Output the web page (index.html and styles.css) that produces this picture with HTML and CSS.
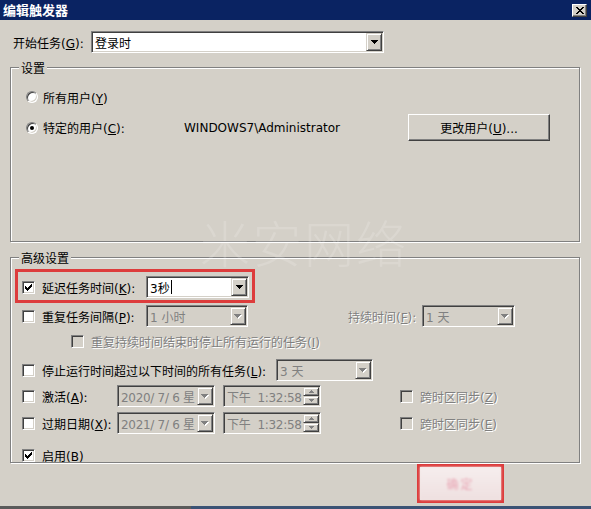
FILE: index.html
```html
<!DOCTYPE html>
<html lang="zh-CN">
<head>
<meta charset="utf-8">
<title>编辑触发器</title>
<link rel="stylesheet" href="styles.css">
</head>
<body>
<div class="window">
  <div class="titlebar">
    <span class="title">编辑触发器</span>
    <span class="close"><svg width="8" height="7" viewBox="0 0 8 7"><path d="M0 0h2v1h1v1h2V1h1V0h2v1H7v1H6v1H5v1h1v1h1v1h1v1H6V6H5V5H3v1H2v1H0V6h1V5h1V4h1V3H2V2H1V1H0z" fill="#000"/></svg></span>
  </div>

  <div class="start-row">
    <label class="start-label">开始任务(<u>G</u>):</label>
    <div class="field combo-start">
      <span class="field-text">登录时</span>
      <span class="dd"><svg class="arr" width="7" height="4" viewBox="0 0 7 4"><path d="M0 0h7v1H0zM1 1h5v1H1zM2 2h3v1H2zM3 3h1v1H3z"/></svg></span>
    </div>
  </div>

  <fieldset class="group group-settings">
    <legend>设置</legend>
    <div class="radio-row radio-row-1">
      <span class="radio"></span><span>所有用户(<u>Y</u>)</span>
    </div>
    <div class="radio-row radio-row-2">
      <span class="radio checked"></span><span class="radio-label">特定的用户(<u>C</u>):</span>
      <span class="user">WINDOWS7\Administrator</span>
      <button class="btn change-user">更改用户(<u>U</u>)...</button>
    </div>
  </fieldset>

  <fieldset class="group group-advanced">
    <legend>高级设置</legend>

    <div class="row row-delay">
      <span class="check checked"><svg width="7" height="7" viewBox="0 0 7 7"><path d="M6 0h1v3H6v1H5v1H4v1H3v1H2V6H1V5H0V2h1v1h1v1h1V3h1V2h1V1h1z"/></svg></span>
      <span class="lbl lbl-k">延迟任务时间(<u>K</u>):</span>
      <div class="field w-delay">
        <span class="field-text">3秒<i class="caret"></i></span>
        <span class="dd"><svg class="arr" width="7" height="4" viewBox="0 0 7 4"><path d="M0 0h7v1H0zM1 1h5v1H1zM2 2h3v1H2zM3 3h1v1H3z"/></svg></span>
      </div>
    </div>

    <div class="row row-repeat">
      <span class="check"></span>
      <span class="lbl lbl-k">重复任务间隔(<u>P</u>):</span>
      <div class="field disabled w-repeat">
        <span class="field-text">1 小时</span>
        <span class="dd"><svg class="arr" width="8" height="5" viewBox="0 0 8 5"><path fill="#fff" d="M1 1h7v1H1zM2 2h5v1H2zM3 3h3v1H3zM4 4h1v1H4z"/><path fill="#808080" d="M0 0h7v1H0zM1 1h5v1H1zM2 2h3v1H2zM3 3h1v1H3z"/></svg></span>
      </div>
      <span class="lbl dim lbl-dur">持续时间(<u>F</u>):</span>
      <div class="field disabled w-dur">
        <span class="field-text">1 天</span>
        <span class="dd"><svg class="arr" width="8" height="5" viewBox="0 0 8 5"><path fill="#fff" d="M1 1h7v1H1zM2 2h5v1H2zM3 3h3v1H3zM4 4h1v1H4z"/><path fill="#808080" d="M0 0h7v1H0zM1 1h5v1H1zM2 2h3v1H2zM3 3h1v1H3z"/></svg></span>
      </div>
    </div>

    <div class="row row-sub">
      <span class="check off"></span>
      <span class="lbl dim">重复持续时间结束时停止所有运行的任务(<u>I</u>)</span>
    </div>

    <div class="row row-stop">
      <span class="check"></span>
      <span class="lbl lbl-stop">停止运行时间超过以下时间的所有任务(<u>L</u>):</span>
      <div class="field disabled w-stop">
        <span class="field-text">3 天</span>
        <span class="dd"><svg class="arr" width="8" height="5" viewBox="0 0 8 5"><path fill="#fff" d="M1 1h7v1H1zM2 2h5v1H2zM3 3h3v1H3zM4 4h1v1H4z"/><path fill="#808080" d="M0 0h7v1H0zM1 1h5v1H1zM2 2h3v1H2zM3 3h1v1H3z"/></svg></span>
      </div>
    </div>

    <div class="row row-date row-act">
      <span class="check"></span>
      <span class="lbl lbl-date">激活(<u>A</u>):</span>
      <div class="field disabled w-date">
        <span class="field-text dt">2020/ 7/ 6 星</span>
        <span class="dd"><svg class="arr" width="8" height="5" viewBox="0 0 8 5"><path fill="#fff" d="M1 1h7v1H1zM2 2h5v1H2zM3 3h3v1H3zM4 4h1v1H4z"/><path fill="#808080" d="M0 0h7v1H0zM1 1h5v1H1zM2 2h3v1H2zM3 3h1v1H3z"/></svg></span>
      </div>
      <div class="field disabled w-time">
        <span class="field-text dt">下午&nbsp;&nbsp;1:32:58</span>
        <span class="spin">
          <span class="spin-btn"><svg width="5" height="3" viewBox="0 0 5 3"><path fill="#808080" d="M2 0h1v1h1v1h1v1H0V2h1V1h1z"/></svg></span>
          <span class="spin-btn"><svg width="5" height="3" viewBox="0 0 5 3"><path fill="#808080" d="M0 0h5v1H4v1H3v1H2V2H1V1H0z"/></svg></span>
        </span>
      </div>
      <span class="check off tz-check"></span>
      <span class="lbl dim">跨时区同步(<u>Z</u>)</span>
    </div>

    <div class="row row-date row-exp">
      <span class="check"></span>
      <span class="lbl lbl-date">过期日期(<u>X</u>):</span>
      <div class="field disabled w-date">
        <span class="field-text dt">2021/ 7/ 6 星</span>
        <span class="dd"><svg class="arr" width="8" height="5" viewBox="0 0 8 5"><path fill="#fff" d="M1 1h7v1H1zM2 2h5v1H2zM3 3h3v1H3zM4 4h1v1H4z"/><path fill="#808080" d="M0 0h7v1H0zM1 1h5v1H1zM2 2h3v1H2zM3 3h1v1H3z"/></svg></span>
      </div>
      <div class="field disabled w-time">
        <span class="field-text dt">下午&nbsp;&nbsp;1:32:58</span>
        <span class="spin">
          <span class="spin-btn"><svg width="5" height="3" viewBox="0 0 5 3"><path fill="#808080" d="M2 0h1v1h1v1h1v1H0V2h1V1h1z"/></svg></span>
          <span class="spin-btn"><svg width="5" height="3" viewBox="0 0 5 3"><path fill="#808080" d="M0 0h5v1H4v1H3v1H2V2H1V1H0z"/></svg></span>
        </span>
      </div>
      <span class="check off tz-check"></span>
      <span class="lbl dim">跨时区同步(<u>E</u>)</span>
    </div>

    <div class="row row-enable">
      <span class="check checked"><svg width="7" height="7" viewBox="0 0 7 7"><path d="M6 0h1v3H6v1H5v1H4v1H3v1H2V6H1V5H0V2h1v1h1v1h1V3h1V2h1V1h1z"/></svg></span>
      <span class="lbl">启用(B)</span>
    </div>
  </fieldset>

  <div class="footer">
    <div class="ok-mark"><button class="ok-btn">确定</button></div>
  </div>
  <div class="taskbar"></div>

  <div class="watermark">米安网络</div>
</div>
</body>
</html>
```

FILE: styles.css
```css
html, body {
  margin: 0;
  padding: 0;
}
body {
  width: 591px;
  height: 509px;
  overflow: hidden;
  background: #d4d0c8;
  font-family: "DejaVu Sans", "Noto Sans CJK SC", sans-serif;
  font-size: 12px;
  color: #000;
}
.window {
  position: relative;
  width: 591px;
  height: 509px;
  display: flex;
  flex-direction: column;
}
u { text-decoration: underline; text-underline-offset: 1px; }

.titlebar {
  height: 20px;
  flex: none;
  background: #0a2362;
  display: flex;
  align-items: center;
  justify-content: space-between;
  padding: 0 4px 0 3px;
}
.title {
  color: #fff;
  font-family: "Noto Sans CJK SC", sans-serif;
  font-weight: bold;
  font-size: 13px;
  line-height: 20px;
}
.close {
  width: 15px;
  height: 13px;
  box-sizing: border-box;
  background: #d4d0c8;
  border: 1px solid;
  border-color: #fff #404040 #404040 #fff;
  box-shadow: inset -1px -1px 0 #808080;
  display: flex;
  align-items: center;
  justify-content: center;
  margin-top: 1px;
}

.start-row {
  margin-top: 10px;
  height: 24px;
  display: flex;
  align-items: center;
  padding-left: 13px;
}
.start-label { width: 78px; }
.combo-start { width: 293px; height: 24px; }

/* sunken field */
.field {
  display: flex;
  box-sizing: border-box;
  background: #fff;
  border: 1px solid;
  border-color: #808080 #fff #fff #808080;
  box-shadow: inset 1px 1px 0 #404040, inset -1px -1px 0 #d4d0c8;
  padding: 1px;
  height: 22px;
  flex: none;
}
.field.disabled { background: #d4d0c8; color: #808080; }
.field-text {
  flex: 1;
  display: flex;
  align-items: center;
  padding-left: 2px;
  white-space: pre;
  overflow: hidden;
}
.field-text.dt { letter-spacing: -0.3px; }
.caret {
  display: inline-block;
  width: 1px;
  height: 14px;
  background: #000;
  margin-left: 1px;
}
.dd {
  width: 16px;
  flex: none;
  box-sizing: border-box;
  background: #d4d0c8;
  border: 1px solid;
  border-color: #d4d0c8 #404040 #404040 #d4d0c8;
  box-shadow: inset 1px 1px 0 #fff, inset -1px -1px 0 #808080;
  display: flex;
  align-items: center;
  justify-content: center;
}
.arr { display: block; }
.spin {
  width: 16px;
  flex: none;
  display: flex;
  flex-direction: column;
}
.spin-btn {
  flex: 1;
  box-sizing: border-box;
  background: #d4d0c8;
  border: 1px solid;
  border-color: #d4d0c8 #404040 #404040 #d4d0c8;
  box-shadow: inset 1px 1px 0 #fff, inset -1px -1px 0 #808080;
  display: flex;
  align-items: center;
  justify-content: center;
}

/* group boxes */
.group {
  margin: 0 11px 0 10px;
  padding: 0;
  border: 1px solid #808080;
  box-shadow: 1px 1px 0 #fff, inset 1px 1px 0 #fff;
  box-sizing: border-box;
  min-width: 0;
}
.group legend {
  margin-left: 8px;
  padding: 0 2px;
  line-height: 15px;
  font-family: "Noto Sans CJK SC", sans-serif;
  background: #d4d0c8;
}
.group-settings { margin-top: 6px; height: 182px; }
.group-advanced { margin-top: 8px; height: 213px; }

.radio-row {
  display: flex;
  align-items: center;
  padding-left: 15px;
}
.radio-row-1 { margin-top: 14px; height: 16px; }
.radio-row-2 { margin-top: 9px; height: 27px; }
.radio {
  width: 12px;
  height: 12px;
  box-sizing: border-box;
  border-radius: 50%;
  background: #fff;
  border: 1px solid;
  border-color: #808080 #fff #fff #808080;
  box-shadow: inset 1px 1px 0 #404040, inset -1px -1px 0 #d4d0c8;
  margin-right: 5px;
  position: relative;
  flex: none;
}
.radio.checked::after {
  content: "";
  position: absolute;
  left: 3px;
  top: 3px;
  width: 4px;
  height: 4px;
  border-radius: 50%;
  background: #000;
}
.radio-label { width: 141px; }
.user { width: 224px; }

.btn {
  font: inherit;
  color: #000;
  background: #d4d0c8;
  border: 1px solid;
  border-color: #fff #404040 #404040 #fff;
  box-shadow: inset -1px -1px 0 #808080;
  padding: 0;
  box-sizing: border-box;
}
.change-user { width: 142px; height: 27px; }

/* rows in advanced */
.row {
  display: flex;
  align-items: center;
  padding-left: 11px;
}
.check {
  width: 13px;
  height: 13px;
  box-sizing: border-box;
  background: #fff;
  border: 1px solid;
  border-color: #808080 #fff #fff #808080;
  box-shadow: inset 1px 1px 0 #404040, inset -1px -1px 0 #d4d0c8;
  display: flex;
  align-items: center;
  justify-content: center;
  flex: none;
  margin-right: 7px;
}
.check.off { background: #d4d0c8; }
.lbl { white-space: nowrap; }
.dim { color: #808080; text-shadow: 1px 1px 0 #fff; }

.row-delay {
  margin: 4px 0 0 4px;
  width: 240px;
  height: 34px;
  box-sizing: border-box;
  border: 3px solid #dd3c3c;
  padding: 2px 0 0 4px;
}
.lbl-k { width: 104px; }
.w-delay { width: 103px; }

.row-repeat { margin-top: 2px; height: 22px; }
.w-repeat { width: 102px; }
.lbl-dur { margin-left: 100px; width: 74px; }
.w-dur { width: 93px; }

.row-sub { margin-top: 6px; height: 16px; padding-left: 60px; }

.row-stop { margin-top: 10px; height: 22px; }
.lbl-stop { width: 234px; }
.w-stop { width: 97px; }

.row-act { margin-top: 4px; height: 22px; }
.row-exp { margin-top: 5px; height: 22px; }
.lbl-date { width: 75px; }
.w-date { width: 98px; }
.w-time { width: 98px; margin-left: 8px; }
.tz-check { margin-left: 79px; }

.row-enable { margin-top: 14px; height: 14px; }

.footer {
  display: flex;
  justify-content: flex-end;
  padding-right: 87px;
  margin-top: 1px;
}
.ok-mark {
  width: 87px;
  height: 39px;
  box-sizing: border-box;
  border: 3px solid #dd3c3c;
  background: #f1e4e2;
  display: flex;
}
.ok-btn {
  flex: 1;
  border: none;
  background: linear-gradient(#f6eeee, #efe0e0);
  font: inherit;
  color: #e8a6b4;
  filter: blur(0.9px);
  letter-spacing: 2px;
}
.taskbar {
  margin-top: 3px;
  height: 3px;
  background: linear-gradient(to right, #5a5a5a 0 191px, #3b5375 191px);
}

.watermark {
  position: absolute;
  left: 200px;
  top: 216px;
  font-family: "Noto Sans CJK SC", sans-serif;
  font-weight: 300;
  font-size: 50px;
  line-height: 50px;
  letter-spacing: 2px;
  color: rgba(255, 255, 255, 0.16);
  pointer-events: none;
}
```
